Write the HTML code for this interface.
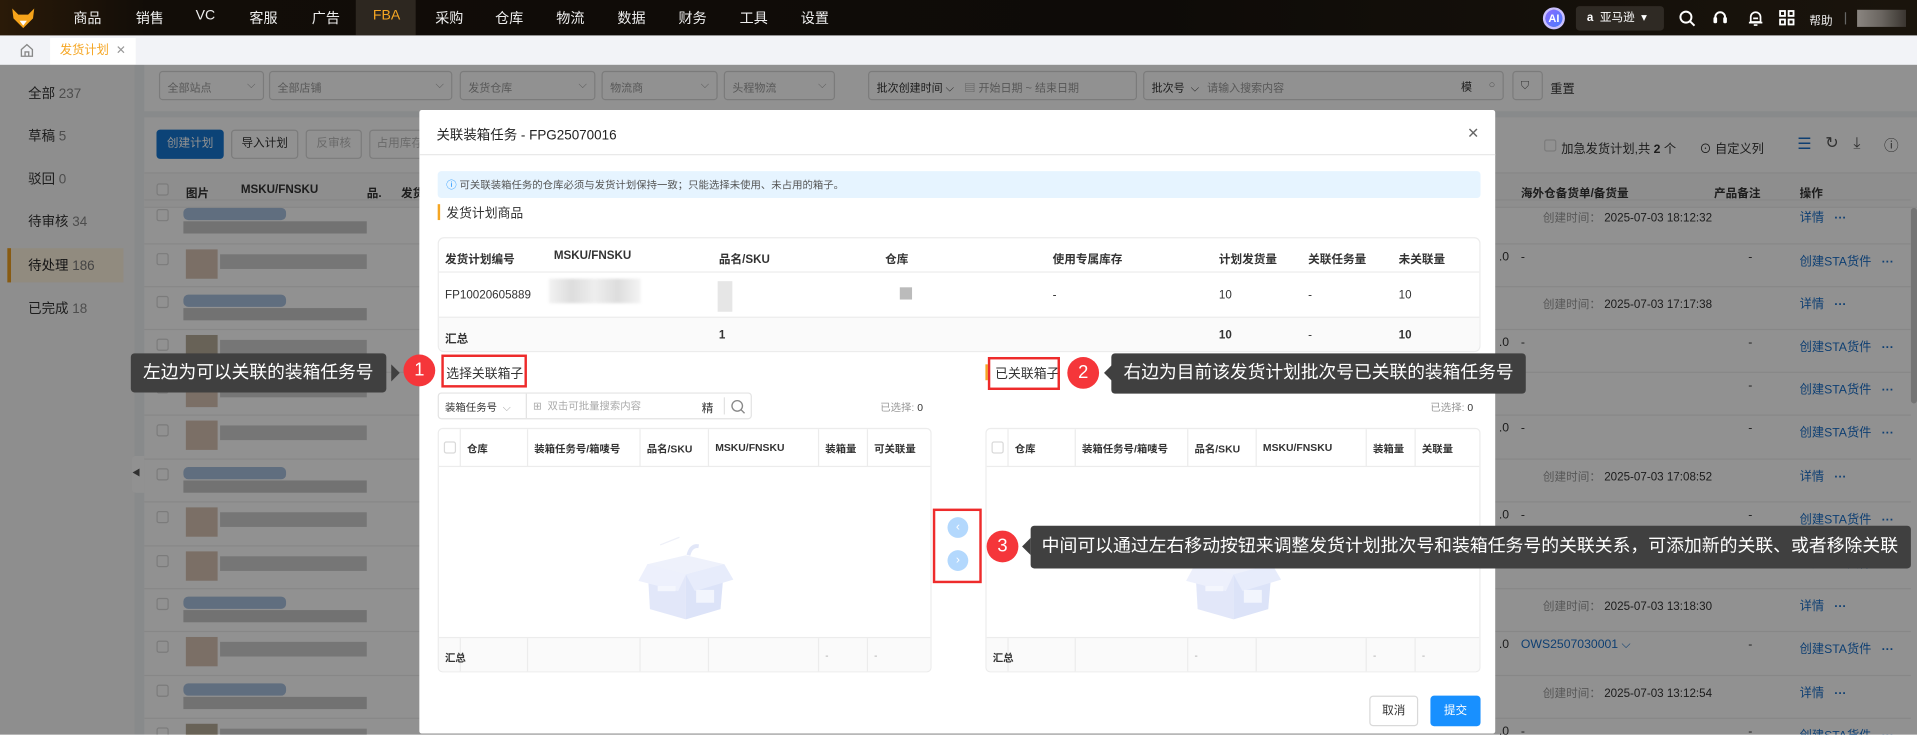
<!DOCTYPE html>
<html><head><meta charset="utf-8">
<style>
*{margin:0;padding:0;box-sizing:border-box}
html,body{width:1917px;height:735px;overflow:hidden;background:#fff}
body{font-family:"Liberation Sans","Noto Sans CJK SC",sans-serif;font-size:10px;color:#333}
#s{position:absolute;left:0;top:0;width:1568px;height:601px;transform:scale(1.22258);transform-origin:0 0;overflow:hidden}
.a{position:absolute}
.nav{left:0;top:0;width:1568px;height:29px;background:linear-gradient(90deg,#2a1a08 0,#120d08 120px,#0e0b08 60%,#1a140c 100%)}
.nav span.m{position:absolute;top:7px;color:#eee;font-size:11.5px}
.tabbar{left:0;top:29px;width:1568px;height:24px;background:#f2f3f7}
.bg{left:0;top:53px;width:1568px;height:548px;background:#f0f2f5}
.ov{left:0;top:53px;width:1568px;height:548px;background:rgba(0,0,0,.43)}
.sel{position:absolute;top:5px;height:24px;border:1px solid #d9d9d9;border-radius:3px;background:#fff;color:#999;font-size:9px;padding:6px 6px}
.sel i{position:absolute;right:6px;top:5px;font-style:normal;color:#999}
.btn{position:absolute;top:106px;height:24px;border:1px solid #d9d9d9;border-radius:3px;background:#fff;font-size:9.5px;text-align:center;line-height:22px}
.bl{color:#1a6fc8}
.modal{left:343px;top:90px;width:880px;height:510px;background:#fff;border-radius:2px}
.th{font-weight:bold;font-size:9.5px;color:#333}
.tip{position:absolute;background:#404040;color:#fff;font-size:14.5px;border-radius:3px;padding:0 10px;white-space:nowrap}
.num{position:absolute;width:26px;height:26px;border-radius:50%;background:#f5363a;color:#fff;font-size:15px;text-align:center;line-height:26px}
.rb{position:absolute;border:2px solid #ee2b2b}
.cb{position:absolute;width:10px;height:10px;border:1px solid #d9d9d9;border-radius:2px;background:#fff}
.vl{position:absolute;width:1px;background:#ececec}
.hl{position:absolute;height:1px;background:#ececec}
</style></head><body><div id="s">

<div class="a nav">
 <svg class="a" style="left:9px;top:6px" width="20" height="18" viewBox="0 0 20 18"><path d="M1 1 L6 6 L14 6 L19 1 L18 9 L10 17 L2 9 Z" fill="#f5a31a"/><path d="M7 11 L10 15 L13 11 Z" fill="#fff"/></svg>
 <span class="m" style="left:60px">商品</span><span class="m" style="left:111px">销售</span><span class="m" style="left:160px">VC</span><span class="m" style="left:204px">客服</span><span class="m" style="left:255px">广告</span>
 <div class="a" style="left:291px;top:0;width:49px;height:29px;background:#2d2720"></div>
 <span class="m" style="left:305px;color:#f5a623">FBA</span>
 <span class="m" style="left:356px">采购</span><span class="m" style="left:405px">仓库</span><span class="m" style="left:455px">物流</span><span class="m" style="left:505px">数据</span><span class="m" style="left:555px">财务</span><span class="m" style="left:605px">工具</span><span class="m" style="left:655px">设置</span>
 <div class="a" style="left:1262px;top:6px;width:18px;height:18px;border-radius:50%;background:linear-gradient(135deg,#8a6cff,#4a7bff);border:2px solid #c9c0ff;color:#fff;font-size:9px;font-weight:bold;text-align:center;line-height:14px">AI</div>
 <div class="a" style="left:1289px;top:5px;width:72px;height:20px;border-radius:3px;background:#2f2a24;color:#fff;font-size:9.5px;line-height:20px;padding-left:9px"><b>a</b>&nbsp; 亚马逊 &nbsp;▾</div>
 <svg class="a" style="left:1373px;top:8px" width="14" height="14" viewBox="0 0 14 14"><circle cx="6" cy="6" r="4.5" stroke="#fff" stroke-width="1.6" fill="none"/><path d="M9.5 9.5 L13 13" stroke="#fff" stroke-width="1.6"/></svg>
 <svg class="a" style="left:1400px;top:8px" width="14" height="14" viewBox="0 0 14 14"><path d="M3 9 V6 a4 4 0 0 1 8 0 V9" stroke="#fff" stroke-width="1.6" fill="none"/><rect x="1.5" y="6" width="3" height="5" rx="1" fill="#fff"/><rect x="9.5" y="6" width="3" height="5" rx="1" fill="#fff"/></svg>
 <svg class="a" style="left:1429px;top:8px" width="14" height="14" viewBox="0 0 14 14"><path d="M3 10 V6 a4 4 0 0 1 8 0 V10 Z M1.5 10.5 H12.5 M5.5 12.5 H8.5 M5 7 H9" stroke="#fff" stroke-width="1.4" fill="none"/></svg>
 <svg class="a" style="left:1455px;top:8px" width="13" height="13" viewBox="0 0 13 13"><g stroke="#fff" stroke-width="1.5" fill="none"><rect x="1" y="1" width="4" height="4"/><rect x="8" y="1" width="4" height="4"/><rect x="1" y="8" width="4" height="4"/><rect x="8" y="8" width="4" height="4"/></g></svg>
 <span class="m" style="left:1480px;top:9px;font-size:9.5px">帮助</span>
 <div class="a" style="left:1509px;top:10px;width:1px;height:10px;background:#666"></div>
 <div class="a" style="left:1519px;top:8px;width:40px;height:14px;background:linear-gradient(90deg,#8a8580,#6a6560 50%,#3a3530)"></div>
</div>

<div class="a tabbar">
 <svg class="a" style="left:16px;top:6px" width="12" height="12" viewBox="0 0 12 12"><path d="M1.5 5.5 L6 1.5 L10.5 5.5 V11 H1.5 Z M4.5 11 V7.5 H7.5 V11" stroke="#888" stroke-width="1.1" fill="none"/></svg>
 <div class="a" style="left:41px;top:2px;width:70px;height:22px;background:#fff;color:#f5a623;font-size:10px;line-height:22px;padding-left:8px">发货计划 <span style="color:#999;margin-left:3px">✕</span></div>
</div>

<div class="a bg">
 <div class="a" style="left:0;top:0;width:110px;height:548px;background:#fafafa"></div>
 <div class="a" style="left:23px;top:15px;font-size:11px;color:#333">全部 <span style="color:#888">237</span></div>
 <div class="a" style="left:23px;top:50px;font-size:11px;color:#333">草稿 <span style="color:#888">5</span></div>
 <div class="a" style="left:23px;top:85px;font-size:11px;color:#333">驳回 <span style="color:#888">0</span></div>
 <div class="a" style="left:23px;top:120px;font-size:11px;color:#333">待审核 <span style="color:#888">34</span></div>
 <div class="a" style="left:6px;top:150px;width:95px;height:28px;background:#fff4e0;border-left:3px solid #f0a020"></div>
 <div class="a" style="left:23px;top:156px;font-size:11px;color:#222">待处理 <span style="color:#777">186</span></div>
 <div class="a" style="left:23px;top:191px;font-size:11px;color:#333">已完成 <span style="color:#888">18</span></div>
 <div class="a" style="left:108px;top:320px;width:10px;height:30px;background:#fff;border-radius:3px 0 0 3px;font-size:7px;color:#555;line-height:30px">◀</div>

 <div class="a" style="left:118px;top:0;width:1450px;height:38px;background:#fff">
  <div class="sel" style="left:12px;width:86px">全部站点<i>⌵</i></div>
  <div class="sel" style="left:102px;width:150px">全部店铺<i>⌵</i></div>
  <div class="sel" style="left:258px;width:111px">发货仓库<i>⌵</i></div>
  <div class="sel" style="left:374px;width:95px">物流商<i>⌵</i></div>
  <div class="sel" style="left:474px;width:91px">头程物流<i>⌵</i></div>
  <div class="sel" style="left:592px;width:220px;color:#333">批次创建时间 ⌵ <span style="color:#999;margin-left:6px">▤ 开始日期 ~ 结束日期</span></div>
  <div class="sel" style="left:817px;width:295px;color:#333">批次号 &nbsp;⌵ <span style="color:#999;margin-left:4px">请输入搜索内容</span><i style="right:25px;color:#333">模</i><i>○</i></div>
  <div class="sel" style="left:1119px;width:25px;color:#666">⛉</div>
  <div class="a" style="left:1150px;top:11px;font-size:10px;color:#333">重置</div>
 </div>

 <div class="a" style="left:118px;top:43px;width:1450px;height:505px;background:#fff"></div>
 <div class="btn" style="left:128px;top:53px;width:55px;background:#1677d2;border-color:#1677d2;color:#fff">创建计划</div>
 <div class="btn" style="left:189px;top:53px;width:55px">导入计划</div>
 <div class="btn" style="left:250px;top:53px;width:46px;color:#bbb">反审核</div>
 <div class="btn" style="left:302px;top:53px;width:50px;color:#bbb">占用库存</div>
 <div class="cb" style="left:1263px;top:61px"></div>
 <div class="a" style="left:1277px;top:60px;font-size:10px">加急发货计划,共 <b>2</b> 个</div>
 <div class="a" style="left:1390px;top:60px;font-size:10px">⊙ 自定义列</div>
 <div class="a bl" style="left:1470px;top:57px;font-size:13px">☰</div>
 <div class="a" style="left:1493px;top:56px;font-size:13px;color:#555">↻</div>
 <div class="a" style="left:1516px;top:56px;font-size:13px;color:#555">⤓</div>
 <div class="a" style="left:1541px;top:57px;font-size:12px;color:#555">ⓘ</div>
 <div class="a" style="left:118px;top:88px;width:1450px;height:29px;background:#fafafa;border-top:1px solid #eee;border-bottom:1px solid #eee"></div>
 <div class="cb" style="left:128px;top:97px"></div>
 <div class="a th" style="left:152px;top:97px">图片</div><div class="a th" style="left:197px;top:97px">MSKU/FNSKU</div><div class="a th" style="left:300px;top:97px">品.</div><div class="a th" style="left:328px;top:97px">发货</div>
 <div class="a th" style="left:1244px;top:97px">海外仓备货单/备货量</div><div class="a th" style="left:1402px;top:97px">产品备注</div><div class="a th" style="left:1472px;top:97px">操作</div>
 <div class="a" style="left:1563px;top:117px;width:5px;height:160px;background:#ccc;border-radius:3px"></div>
</div>

<div id="rows"></div>
<script>
var ys=[[176,'t','18:12:32'],[212,'s'],[247,'t','17:17:38'],[282,'s'],[317,'s'],[352,'s'],[388,'t','17:08:52'],[423,'s'],[459,'s'],[494,'t','13:18:30'],[529,'o'],[565,'t','13:12:54'],[600,'s']];
var h='';
ys.forEach(function(r,i){var y=r[0];
 h+='<div class="hl" style="left:118px;top:'+(y-13)+'px;width:1445px;background:#eee"></div>';
 h+='<div class="cb" style="left:128px;top:'+(y-5)+'px"></div>';
 if(r[1]=='t'){
  h+='<div class="a" style="left:150px;top:'+(y-6)+'px;width:84px;height:10px;background:#a9c2e0;border-radius:4px"></div><div class="a" style="left:150px;top:'+(y+5)+'px;width:150px;height:10px;background:#c9c9c9"></div>';
  h+='<div class="a" style="left:1262px;top:'+(y-6)+'px;font-size:9.5px;color:#999">创建时间： <span style="color:#333">2025-07-03 '+r[2]+'</span></div><div class="a bl" style="left:1472px;top:'+(y-7)+'px;font-size:10px">详情 &nbsp; <b>···</b></div>';
 }else{
  h+='<div class="a" style="left:152px;top:'+(y-8)+'px;width:26px;height:24px;background:'+(i%3?'#c9a994':'#9a8a6e')+';opacity:.7"></div><div class="a" style="left:180px;top:'+(y-4)+'px;width:120px;height:12px;background:#d0d0d0"></div>';
  h+='<div class="a" style="left:1226px;top:'+(y-7)+'px;font-size:10px">.0</div><div class="a" style="left:1244px;top:'+(y-7)+'px;font-size:10px">'+(r[1]=='o'?'<span class="bl">OWS2507030001 ⌵</span>':'-')+'</div><div class="a" style="left:1430px;top:'+(y-7)+'px;font-size:10px">-</div><div class="a bl" style="left:1472px;top:'+(y-7)+'px;font-size:10px">创建STA货件 &nbsp; <b>···</b></div>';
 }});
document.getElementById('rows').innerHTML=h;
</script>

<div class="a ov"></div>

<div class="a modal">
 <div class="a" style="left:14px;top:12px;font-size:11px;color:#222">关联装箱任务 - FPG25070016</div>
 <div class="a" style="left:857px;top:12px;font-size:12px;color:#666">✕</div>
 <div class="hl" style="left:0;top:36px;width:880px;background:#e8e8e8"></div>
 <div class="a" style="left:15px;top:50px;width:853px;height:22px;background:#e6f4ff;border-radius:3px;font-size:8.5px;color:#555;line-height:22px;padding-left:7px"><span style="color:#1890ff">ⓘ</span> 可关联装箱任务的仓库必须与发货计划保持一致；只能选择未使用、未占用的箱子。</div>
 <div class="a" style="left:15px;top:77px;width:2px;height:13px;background:#f5a623"></div>
 <div class="a" style="left:22px;top:77px;font-size:10.5px;color:#333">发货计划商品</div>
 <div class="a" style="left:15px;top:104px;width:853px;height:94px;border:1px solid #ececec;border-radius:5px;overflow:hidden">
  <div class="hl" style="left:0;top:27px;width:853px"></div>
  <div class="a" style="left:0;top:64px;width:853px;height:30px;background:#fafafa;border-top:1px solid #ececec"></div>
  <div class="a th" style="left:5px;top:9px">发货计划编号</div><div class="a th" style="left:94px;top:9px">MSKU/FNSKU</div><div class="a th" style="left:229px;top:9px">品名/SKU</div><div class="a th" style="left:365px;top:9px">仓库</div><div class="a th" style="left:502px;top:9px">使用专属库存</div><div class="a th" style="left:638px;top:9px">计划发货量</div><div class="a th" style="left:711px;top:9px">关联任务量</div><div class="a th" style="left:785px;top:9px">未关联量</div>
  <div class="a" style="left:5px;top:41px;font-size:9.5px">FP10020605889</div>
  <div class="a" style="left:90px;top:33px;width:75px;height:20px;background:linear-gradient(90deg,#f2f2f2,#ddd,#eee,#ddd,#f4f4f4);filter:blur(1px)"></div>
  <div class="a" style="left:228px;top:35px;width:12px;height:25px;background:#e6e6e6"></div>
  <div class="a" style="left:377px;top:40px;width:10px;height:10px;background:#bbb"></div>
  <div class="a" style="left:502px;top:41px;font-size:9.5px">-</div><div class="a" style="left:638px;top:41px;font-size:9.5px">10</div><div class="a" style="left:711px;top:41px;font-size:9.5px">-</div><div class="a" style="left:785px;top:41px;font-size:9.5px">10</div>
  <div class="a th" style="left:5px;top:74px">汇总</div><div class="a th" style="left:229px;top:74px">1</div><div class="a th" style="left:638px;top:74px">10</div><div class="a" style="left:711px;top:74px;font-size:9.5px">-</div><div class="a th" style="left:785px;top:74px">10</div>
 </div>
 <div class="a" style="left:22px;top:208px;font-size:10.5px">选择关联箱子</div>
 <div class="a" style="left:463px;top:208px;width:2px;height:13px;background:#f5a623"></div>
 <div class="a" style="left:471px;top:208px;font-size:10.5px">已关联箱子</div>
 <div class="a" style="left:15px;top:231px;width:257px;height:22px;border:1px solid #e3e3e3;border-radius:3px;font-size:8.5px">
  <span class="a" style="left:5px;top:5px;color:#333">装箱任务号 &nbsp;<span style="color:#aaa">⌵</span></span>
  <div class="vl" style="left:71px;top:0;height:20px;background:#e3e3e3"></div>
  <span class="a" style="left:77px;top:4px;color:#aaa">⊞ &nbsp;双击可批量搜索内容</span>
  <span class="a" style="left:215px;top:4px;color:#333;font-size:9.5px">精</span>
  <div class="vl" style="left:233px;top:3px;height:14px;background:#e3e3e3"></div>
  <svg class="a" style="left:238px;top:4px" width="13" height="13" viewBox="0 0 13 13"><circle cx="6" cy="6" r="4.3" stroke="#888" stroke-width="1.1" fill="none"/><path d="M9 9 L12 12" stroke="#888" stroke-width="1.1"/></svg>
 </div>
 <div class="a" style="left:377px;top:237px;font-size:8.5px;color:#999">已选择: <span style="color:#333">0</span></div>
 <div class="a" style="left:827px;top:237px;font-size:8.5px;color:#999">已选择: <span style="color:#333">0</span></div>
 <div id="tL" class="a" style="left:15px;top:260px;width:404px;height:200px;border:1px solid #ececec;border-radius:4px;overflow:hidden"></div>
 <div id="tR" class="a" style="left:463px;top:260px;width:405px;height:200px;border:1px solid #ececec;border-radius:4px;overflow:hidden"></div>
 <div class="a" style="left:432px;top:333px;width:17px;height:17px;border-radius:50%;background:#b3d8fd;color:#fff;font-size:10px;text-align:center;line-height:17px">‹</div>
 <div class="a" style="left:432px;top:360px;width:17px;height:17px;border-radius:50%;background:#b3d8fd;color:#fff;font-size:10px;text-align:center;line-height:17px">›</div>
 <div class="a" style="left:777px;top:479px;width:40px;height:25px;border:1px solid #d9d9d9;border-radius:3px;font-size:9.5px;text-align:center;line-height:23px">取消</div>
 <div class="a" style="left:827px;top:479px;width:41px;height:25px;background:#1890ff;border-radius:3px;color:#fff;font-size:9.5px;text-align:center;line-height:25px">提交</div>
</div>
<script>
function tbl(id,last,dash){
 var h='<div class="a" style="left:0;top:0;width:100%;height:31px;border-bottom:1px solid #ececec"></div><div class="a" style="left:0;top:170px;width:100%;height:30px;background:#fafafa;border-top:1px solid #ececec"></div>';
 var x=[0,17,72,164,220,310,350];var n=['','仓库','装箱任务号/箱唛号','品名/SKU','MSKU/FNSKU','装箱量',last];
 for(var i=1;i<7;i++){
  h+='<div class="vl" style="left:'+x[i]+'px;top:0;height:31px"></div><div class="vl" style="left:'+x[i]+'px;top:171px;height:29px"></div>';
  h+='<div class="a th" style="left:'+(x[i]+6)+'px;top:10px;font-size:8.5px">'+n[i]+'</div>';
 }
 h+='<div class="cb" style="left:4px;top:10px"></div><div class="a th" style="left:5px;top:181px;font-size:8.5px">汇总</div>';
 dash.forEach(function(i){h+='<div class="a" style="left:'+(x[i]+6)+'px;top:181px;color:#aaa;font-size:8px">-</div>'});
 h+='<svg class="a" style="left:160px;top:84px" width="84" height="74" viewBox="0 0 80 70"><path d="M10 25 L40 18 L70 25 L40 33 Z" fill="#eef1fb"/><path d="M10 25 L40 33 V68 L12 60 Z" fill="#e2e7f9"/><path d="M70 25 L40 33 V68 L67 60 Z" fill="#dce3f8"/><path d="M10 25 L3 38 L34 46 L40 33 Z" fill="#edf0fc"/><path d="M70 25 L77 37 L47 46 L40 33 Z" fill="#e7ecfb"/><rect x="18" y="42" width="14" height="4" fill="#f4f6fd"/><rect x="48" y="45" width="14" height="10" fill="#f2f5fd"/><path d="M42 18 q2 -8 8 -7" stroke="#e2e7f8" stroke-width="3" fill="none"/><path d="M20 10 L35 4" stroke="#eef0f8" stroke-width="1"/></svg>';
 document.getElementById(id).innerHTML=h;
}
tbl('tL','可关联量',[5,6]);tbl('tR','关联量',[3,5,6]);
</script>

<div class="rb" style="left:361px;top:290px;width:70px;height:27px"></div>
<div class="num" style="left:330px;top:290px">1</div>
<div class="tip" style="left:107px;top:289px;height:32px;line-height:32px">左边为可以关联的装箱任务号</div>
<div class="a" style="left:320px;top:298px;border:7px solid transparent;border-left-color:#404040"></div>
<div class="rb" style="left:808px;top:292px;width:59px;height:27px"></div>
<div class="num" style="left:873px;top:292px">2</div>
<div class="a" style="left:896px;top:298px;border:7px solid transparent;border-right-color:#404040"></div>
<div class="tip" style="left:909px;top:289px;height:33px;line-height:33px">右边为目前该发货计划批次号已关联的装箱任务号</div>
<div class="rb" style="left:763px;top:416px;width:40px;height:61px"></div>
<div class="num" style="left:807px;top:434px">3</div>
<div class="a" style="left:829px;top:440px;border:7px solid transparent;border-right-color:#404040"></div>
<div class="tip" style="left:843px;top:430px;height:35px;line-height:35px;padding-left:9px;font-size:14.6px">中间可以通过左右移动按钮来调整发货计划批次号和装箱任务号的关联关系，可添加新的关联、或者移除关联</div>

</div></body></html>
